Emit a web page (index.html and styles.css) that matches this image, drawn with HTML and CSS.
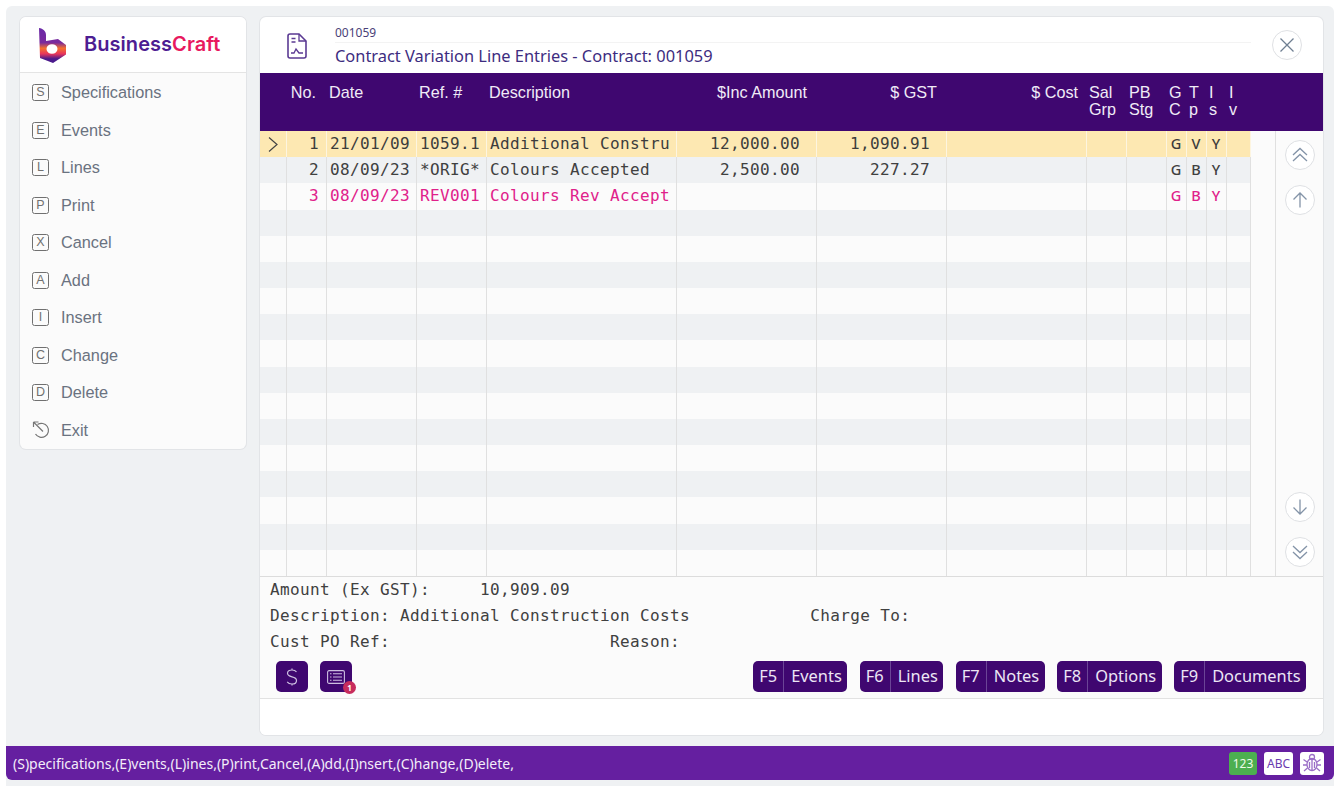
FILE: index.html
```html
<!DOCTYPE html>
<html lang="en">
<head>
<meta charset="utf-8">
<title>Contract Variation Line Entries</title>
<link rel="stylesheet" href="styles.css">
</head>
<body>
<div class="window">
  <div class="content">
    <aside class="sidebar">
      <div class="brand">
        <svg class="logo" viewBox="39 27 28 36" width="28" height="36">
          <defs><linearGradient id="lg" x1="0" y1="0" x2="0" y2="1">
            <stop offset="0" stop-color="#6a2aa8"/><stop offset=".42" stop-color="#7a2a9c"/><stop offset=".58" stop-color="#f4702c"/><stop offset=".74" stop-color="#e8355c"/><stop offset=".88" stop-color="#4b1a8c"/><stop offset="1" stop-color="#4b1a8c"/>
          </linearGradient></defs>
          <path fill="url(#lg)" fill-rule="evenodd" d="M39 27c4 .5 7 3 7 7v6l12-2 8 6v9.500L53 62l-13-5zM46.500 48a5.500 4.800 0 1 0 11 0a5.500 4.800 0 1 0-11 0z"/>
        </svg>
        <span class="brand-name">Business<span class="brand-craft">Craft</span></span>
      </div>
      <nav class="menu">
        <a class="menu-item"><span class="key">S</span>Specifications</a>
        <a class="menu-item"><span class="key">E</span>Events</a>
        <a class="menu-item"><span class="key">L</span>Lines</a>
        <a class="menu-item"><span class="key">P</span>Print</a>
        <a class="menu-item"><span class="key">X</span>Cancel</a>
        <a class="menu-item"><span class="key">A</span>Add</a>
        <a class="menu-item"><span class="key">I</span>Insert</a>
        <a class="menu-item"><span class="key">C</span>Change</a>
        <a class="menu-item"><span class="key">D</span>Delete</a>
        <a class="menu-item"><svg class="exit" viewBox="0 0 18 18" width="18" height="18"><path d="M5 3.600A7 7 0 1 1 3 13" fill="none" stroke="#777" stroke-width="1.200"/><path d="M1 1l9.500 9.500M1 1v5M1 1h5" fill="none" stroke="#777" stroke-width="1.200"/></svg>Exit</a>
      </nav>
    </aside>
    <main class="panel">
      <header class="title-bar">
        <svg class="doc-icon" viewBox="0 0 20 26" width="20" height="26"><path d="M3 1h9l7 7v15a2 2 0 0 1-2 2H3a2 2 0 0 1-2-2V3a2 2 0 0 1 2-2z" fill="none" stroke="#5b3a93" stroke-width="1.600"/><path d="M12 1v7h7M4.500 5.500h4M4.500 9h4M4 20h3l2-4 3 4h4" fill="none" stroke="#5b3a93" stroke-width="1.300"/></svg>
        <div class="title-text">
          <div class="title-code">001059</div>
          <div class="title-main">Contract Variation Line Entries - Contract: 001059</div>
        </div>
        <button class="round-btn close-btn"><svg viewBox="0 0 16 16" width="16" height="16"><path d="M1.500 1.500l13 13M14.500 1.500l-13 13" fill="none" stroke="#6f7f92" stroke-width="1.300"/></svg></button>
      </header>
      <div class="grid-head cols">
        <div></div><div class="r no-h">No.</div><div>Date</div><div>Ref. #</div><div>Description</div><div class="r amt-h">$Inc Amount</div><div class="r amt-h">$ GST</div><div class="r cost-h">$ Cost</div><div>Sal<br>Grp</div><div>PB<br>Stg</div><div>G<br>C</div><div>T<br>p</div><div>I<br>s</div><div>I<br>v</div>
      </div>
      <div class="grid-wrap">
        <div class="rows">
          <div class="row cols sel"><div class="c"><svg viewBox="0 0 10 15" width="10" height="15"><path d="M1 .500l8 7-8 7" fill="none" stroke="#444" stroke-width="1.200"/></svg></div><div class="m r">1</div><div class="m">21/01/09</div><div class="m">1059.1</div><div class="m">Additional Constru</div><div class="m r p">12,000.00</div><div class="m r p">1,090.91</div><div></div><div></div><div></div><div class="t">G</div><div class="t">V</div><div class="t">Y</div><div></div></div>
          <div class="row cols"><div></div><div class="m r">2</div><div class="m">08/09/23</div><div class="m">*ORIG*</div><div class="m">Colours Accepted</div><div class="m r p">2,500.00</div><div class="m r p">227.27</div><div></div><div></div><div></div><div class="t">G</div><div class="t">B</div><div class="t">Y</div><div></div></div>
          <div class="row cols pink"><div></div><div class="m r">3</div><div class="m">08/09/23</div><div class="m">REV001</div><div class="m">Colours Rev Accept</div><div></div><div></div><div></div><div></div><div></div><div class="t">G</div><div class="t">B</div><div class="t">Y</div><div></div></div>
          <div class="row cols"><div></div><div></div><div></div><div></div><div></div><div></div><div></div><div></div><div></div><div></div><div></div><div></div><div></div><div></div></div>
          <div class="row cols"><div></div><div></div><div></div><div></div><div></div><div></div><div></div><div></div><div></div><div></div><div></div><div></div><div></div><div></div></div>
          <div class="row cols"><div></div><div></div><div></div><div></div><div></div><div></div><div></div><div></div><div></div><div></div><div></div><div></div><div></div><div></div></div>
          <div class="row cols"><div></div><div></div><div></div><div></div><div></div><div></div><div></div><div></div><div></div><div></div><div></div><div></div><div></div><div></div></div>
          <div class="row cols"><div></div><div></div><div></div><div></div><div></div><div></div><div></div><div></div><div></div><div></div><div></div><div></div><div></div><div></div></div>
          <div class="row cols"><div></div><div></div><div></div><div></div><div></div><div></div><div></div><div></div><div></div><div></div><div></div><div></div><div></div><div></div></div>
          <div class="row cols"><div></div><div></div><div></div><div></div><div></div><div></div><div></div><div></div><div></div><div></div><div></div><div></div><div></div><div></div></div>
          <div class="row cols"><div></div><div></div><div></div><div></div><div></div><div></div><div></div><div></div><div></div><div></div><div></div><div></div><div></div><div></div></div>
          <div class="row cols"><div></div><div></div><div></div><div></div><div></div><div></div><div></div><div></div><div></div><div></div><div></div><div></div><div></div><div></div></div>
          <div class="row cols"><div></div><div></div><div></div><div></div><div></div><div></div><div></div><div></div><div></div><div></div><div></div><div></div><div></div><div></div></div>
          <div class="row cols"><div></div><div></div><div></div><div></div><div></div><div></div><div></div><div></div><div></div><div></div><div></div><div></div><div></div><div></div></div>
          <div class="row cols"><div></div><div></div><div></div><div></div><div></div><div></div><div></div><div></div><div></div><div></div><div></div><div></div><div></div><div></div></div>
          <div class="row cols"><div></div><div></div><div></div><div></div><div></div><div></div><div></div><div></div><div></div><div></div><div></div><div></div><div></div><div></div></div>
          <div class="row cols"><div></div><div></div><div></div><div></div><div></div><div></div><div></div><div></div><div></div><div></div><div></div><div></div><div></div><div></div></div>
        </div>
        <div class="gutter"></div>
        <div class="scroller">
          <div class="scroll-group">
            <button class="round-btn"><svg viewBox="0 0 18 18" width="18" height="18"><path d="M2 9l7-6.500L16 9M2 15l7-6.500L16 15" fill="none" stroke="#8494a8" stroke-width="1.300"/></svg></button>
            <button class="round-btn"><svg viewBox="0 0 18 18" width="18" height="18"><path d="M9 16.500V2M2.500 8.500L9 2l6.500 6.500" fill="none" stroke="#8494a8" stroke-width="1.300"/></svg></button>
          </div>
          <div class="scroll-group">
            <button class="round-btn"><svg viewBox="0 0 18 18" width="18" height="18"><path d="M9 1.500V16M2.500 9.500L9 16l6.500-6.500" fill="none" stroke="#8494a8" stroke-width="1.300"/></svg></button>
            <button class="round-btn"><svg viewBox="0 0 18 18" width="18" height="18"><path d="M2 3l7 6.500L16 3M2 9l7 6.500L16 9" fill="none" stroke="#8494a8" stroke-width="1.300"/></svg></button>
          </div>
        </div>
      </div>
      <section class="details">
<pre class="detail-text">Amount (Ex GST):     10,909.09
Description: Additional Construction Costs            Charge To:
Cust PO Ref:                      Reason:</pre>
        <div class="actions">
          <div class="icon-btns">
            <button class="icon-btn"><svg viewBox="0 0 12 20" width="12" height="20"><path d="M10.500 5C9.500 3.500 8 3 6 3 3.500 3 1.500 4.200 1.500 6.300c0 2 2 2.900 4.500 3.500 2.600.6 4.500 1.500 4.500 3.600C10.500 15.700 8.500 17 6 17c-2.200 0-3.800-.7-4.800-2.200M6 1.500V3M6 17v1.500" fill="none" stroke="#cdbfe0" stroke-width="1.200"/></svg></button>
            <button class="icon-btn"><svg viewBox="0 0 18 14" width="18" height="14"><rect x=".6" y=".6" width="16.800" height="12.800" rx="1.500" fill="none" stroke="#cdbfe0" stroke-width="1.100"/><path d="M3 3.800h1.500M6 3.800h9M3 7h1.500M6 7h9M3 10.200h1.500M6 10.200h9" stroke="#cdbfe0" stroke-width="1.100"/></svg><span class="badge">1</span></button>
          </div>
          <div class="fkeys">
            <button class="fkey"><span class="fk">F5</span><span class="fl">Events</span></button>
            <button class="fkey"><span class="fk">F6</span><span class="fl">Lines</span></button>
            <button class="fkey"><span class="fk">F7</span><span class="fl">Notes</span></button>
            <button class="fkey"><span class="fk">F8</span><span class="fl">Options</span></button>
            <button class="fkey"><span class="fk">F9</span><span class="fl">Documents</span></button>
          </div>
        </div>
      </section>
      <div class="panel-foot"></div>
    </main>
  </div>
  <footer class="status">
    <span class="status-text">(S)pecifications,(E)vents,(L)ines,(P)rint,Cancel,(A)dd,(I)nsert,(C)hange,(D)elete,</span>
    <div class="status-badges">
      <span class="st st-num">123</span>
      <span class="st st-abc">ABC</span>
      <span class="st st-bug"><svg viewBox="0 0 20 20" width="20" height="20"><g fill="none" stroke="#9b6fc7" stroke-width="1.300"><circle cx="10" cy="4" r="2.500"/><ellipse cx="10" cy="11.500" rx="5" ry="6"/><path d="M10 7v10M7.500 9v6M12.500 9v6M5 9L1.500 6.500M15 9l3.500-2.500M5 12H1M15 12h4M5.500 15L2 18M14.500 15l3.500 3"/></g></svg></span>
    </div>
  </footer>
</div>
</body>
</html>
```
FILE: styles.css
```css
* { box-sizing: border-box; }
html, body { margin: 0; height: 100%; }
body {
  background: #fff;
  padding: 6px 6px 2px;
  height: 788px;
  overflow: hidden;
  font-family: "Liberation Sans", Arial, sans-serif;
}
.window {
  height: 780px;
  background: #eff1f3;
  border-radius: 6px 6px 0 0;
  display: flex;
  flex-direction: column;
  position: relative;
}
.content {
  height: 740px;
  display: flex;
  gap: 14px;
  align-items: flex-start;
  padding: 11px 11px 10px 14px;
}
.sidebar {
  width: 226px;
  flex: none;
  background: #fbfbfb;
  border-radius: 6px;
  box-shadow: 0 0 0 1px #e2e4e7;
  overflow: hidden;
}
.brand {
  height: 56px;
  background: #fff;
  border-bottom: 1px solid #e4e4e4;
  display: flex;
  align-items: center;
  padding-left: 19px;
  gap: 17px;
}
.logo { flex: none; margin-top: 2px; }
.brand-name {
  font-family: Inter, sans-serif;
  font-weight: 600;
  font-size: 20px;
  letter-spacing: .05px;
  color: #4d1d92;
  margin-top: -1px;
}
.brand-craft { color: #e8195f; }
.menu { padding: 1px 0 0; }
.menu-item {
  display: flex;
  align-items: center;
  height: 37.5px;
  padding-left: 12px;
  gap: 12px;
  font-size: 16.300px;
  color: #6a7280;
}
.key {
  width: 17px;
  height: 17px;
  flex: none;
  border: 1.500px solid #707070;
  border-radius: 2.500px;
  font-size: 12.500px;
  line-height: 14px;
  text-align: center;
  color: #707070;
}
.exit { flex: none; width: 19px; margin-right: -2px; }
.panel {
  width: 1063px;
  height: 718px;
  flex: none;
  background: #fff;
  border-radius: 6px;
  box-shadow: 0 0 0 1px #e2e4e7;
  overflow: hidden;
  display: flex;
  flex-direction: column;
}
.title-bar {
  height: 56px;
  flex: none;
  display: flex;
  align-items: flex-start;
  padding-left: 27px;
}
.doc-icon { margin-top: 16px; flex: none; }
.title-text { margin-left: 28px; width: 916px; padding-top: 9px; }
.title-code {
  font-family: "Noto Sans", sans-serif;
  font-size: 12px;
  line-height: 14px;
  height: 17px;
  color: #4a3f78;
  border-bottom: 1px solid #f3f3f3;
}
.title-main {
  font-family: "Noto Sans", sans-serif;
  font-size: 16.400px;
  line-height: 22px;
  margin-top: 2px;
  color: #3d2c80;
  white-space: nowrap;
}
.round-btn {
  width: 30px;
  height: 30px;
  padding: 0;
  border-radius: 50%;
  border: 1.500px solid #dfe1e4;
  background: #fff;
  display: flex;
  align-items: center;
  justify-content: center;
  flex: none;
}
.close-btn { margin: 13px 0 0 21px; }
.cols {
  display: grid;
  grid-template-columns: 27px 40px 90px 70px 190px 140px 130px 140px 40px 40px 20px 20px 20px 24px;
}
.grid-head {
  height: 58px;
  flex: none;
  background: #3f0770;
  color: #f0ebf7;
  font-size: 16.200px;
  line-height: 17px;
  padding-top: 11px;
}
.grid-head > div { padding-left: 2px; white-space: nowrap; }
.grid-head .r { text-align: right; padding-left: 0; }
.no-h { padding-right: 11px; }
.amt-h { padding-right: 10px; }
.cost-h { padding-right: 9px; }
.grid-wrap {
  height: 445px;
  flex: none;
  display: flex;
  background: #fbfbfb;
}
.rows { width: 991px; flex: none; display: flex; flex-direction: column; }
.row { flex: 1; min-height: 0; background: #fbfbfb; color: #404040; }
.row:nth-child(even) { background: #eff1f3; }
.row.sel { background: #fde8b2; color: #3c3c3c; }
.row.pink { color: #e0218a; }
.row > div {
  border-right: 1px solid #e0e0e0;
  display: flex;
  align-items: center;
  min-width: 0;
}
.row.sel > div { border-right-color: #fdf5e0; }
.c { justify-content: center; }
.m {
  font-family: "DejaVu Sans Mono", monospace;
  font-size: 16px;
  letter-spacing: .37px;
  padding-left: 3px;
  padding-bottom: 2px;
  white-space: pre;
}
.row > .r { justify-content: flex-end; padding-left: 0; padding-right: 7px; }
.row > .p { padding-right: 16px; }
.t {
  font-family: "Noto Sans", sans-serif;
  font-size: 14.500px;
  font-weight: 500;
  justify-content: center;
  padding: 0 1px 3px 0;
}
.gutter { width: 25px; flex: none; border-right: 1px solid #e0e0e0; }
.scroller {
  flex: 1;
  display: flex;
  flex-direction: column;
  justify-content: space-between;
  align-items: center;
  padding: 9px 0 9px;
}
.scroll-group { display: flex; flex-direction: column; gap: 15px; }
.details {
  height: 123px;
  flex: none;
  background: #fbfbfb;
  border-top: 1px solid #dcdcdc;
  border-bottom: 1px solid #e2e2e2;
  padding: 0 17px 6px 10px;
  display: flex;
  flex-direction: column;
}
.detail-text {
  margin: 0;
  font-family: "DejaVu Sans Mono", monospace;
  font-size: 16px;
  letter-spacing: .37px;
  line-height: 26px;
  color: #404040;
}
.actions {
  display: flex;
  justify-content: space-between;
  margin-top: 6px;
  padding-left: 6px;
}
.icon-btns { display: flex; gap: 12px; }
.icon-btn {
  width: 32px;
  height: 31px;
  padding: 0;
  border: 0;
  border-radius: 5px;
  background: #3f0770;
  display: flex;
  align-items: center;
  justify-content: center;
  position: relative;
}
.badge {
  position: absolute;
  right: -4px;
  bottom: -2px;
  width: 13px;
  height: 13px;
  border-radius: 50%;
  background: #c72c5c;
  color: #fff;
  font: 700 8px/13px "Noto Sans", sans-serif;
  text-align: center;
}
.fkeys { display: flex; gap: 12.500px; }
.fkey {
  height: 31px;
  padding: 0;
  border: 0;
  border-radius: 5px;
  background: #3f0770;
  color: #ece6f5;
  font-family: "Noto Sans", sans-serif;
  font-size: 16.400px;
  display: flex;
  align-items: stretch;
}
.fk {
  width: 31px;
  text-align: center;
  line-height: 29px;
  border-right: 1px solid #6b4596;
}
.fl { padding: 0 5.500px 0 7px; line-height: 29px; }
.panel-foot { flex: 1; background: #fff; }
.status {
  height: 34px;
  flex: none;
  background: #651fa0;
  border-radius: 0 0 6px 6px;
  display: flex;
  align-items: center;
  justify-content: space-between;
  padding: 0 10px 0 7px;
  color: #f3edf9;
}
.status-text {
  font-family: "Noto Sans", sans-serif;
  font-size: 14px;
  white-space: nowrap;
}
.status-badges { display: flex; gap: 7px; align-items: center; }
.st {
  height: 23px;
  border-radius: 3px;
  display: flex;
  align-items: center;
  justify-content: center;
  font-family: "Noto Sans", sans-serif;
  font-size: 12px;
}
.st-num { width: 28px; background: #4caf50; color: #eefbe8; }
.st-abc { width: 29px; background: #fff; color: #6a3ab0; }
.st-bug { width: 24px; background: #fff; }
```
